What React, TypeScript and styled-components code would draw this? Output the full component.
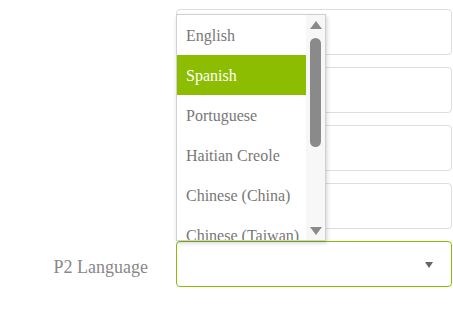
import styled, { createGlobalStyle } from "styled-components";

const GlobalStyle = createGlobalStyle`
    html, body {
        margin: 0;
        padding: 0;
        background: #fff;
    }
`;

const serif = `"Liberation Serif", "Times New Roman", serif`;

const languages = ["English", "Spanish", "Portuguese", "Haitian Creole", "Chinese (China)", "Chinese (Taiwan)"];

const rows = ["", "", "", ""];

const App = () => {
    return (
        <>
            <GlobalStyle />
            <Form>
                {rows.map((label, i) => (
                    <Row key={i}>
                        <Label>{label}</Label>
                        <Field />
                    </Row>
                ))}
                <Row>
                    <Label>P2 Language</Label>
                    <SelectField focused>
                        <Caret />
                    </SelectField>
                </Row>
                <Dropdown>
                    <List>
                        {languages.map((lang) => (
                            <Option key={lang} selected={lang === "Spanish"}>
                                {lang}
                            </Option>
                        ))}
                    </List>
                    <ScrollTrack>
                        <ArrowUp />
                        <Thumb />
                        <ArrowDown />
                    </ScrollTrack>
                </Dropdown>
            </Form>
        </>
    );
};

export default App;

const Form = styled.div`
    position: relative;
    display: flex;
    flex-direction: column;
    gap: 12px;
    padding-top: 9px;
    width: 453px;
    font-family: ${serif};
`;

const Row = styled.div`
    display: grid;
    grid-template-columns: 148px 276px;
    column-gap: 28px;
    align-items: center;
    height: 46px;
`;

const Label = styled.label`
    text-align: right;
    font-family: ${serif};
    font-size: 18px;
    padding-top: 7px;
    color: #888;
`;

const Field = styled.div`
    height: 46px;
    box-sizing: border-box;
    border: 1px solid #dddddd;
    border-radius: 4px;
    background: #fff;
`;

const SelectField = styled(Field)<{ focused?: boolean }>`
    position: relative;
    border-color: ${({ focused }) => (focused ? "#8dbd00" : "#dddddd")};
`;

const Caret = styled.span`
    position: absolute;
    right: 18px;
    top: 20px;
    width: 0;
    height: 0;
    border-left: 4px solid transparent;
    border-right: 4px solid transparent;
    border-top: 6px solid #666;
`;

const Dropdown = styled.div`
    position: absolute;
    top: 14px;
    left: 176px;
    width: 150px;
    height: 227px;
    box-sizing: border-box;
    border: 1px solid #d0d0d0;
    background: #fff;
    box-shadow: 1px 2px 4px rgba(0, 0, 0, 0.18);
    display: flex;
    overflow: hidden;
`;

const List = styled.ul`
    list-style: none;
    margin: 0;
    padding: 0;
    flex: 1;
    min-width: 0;
`;

const Option = styled.li<{ selected?: boolean }>`
    height: 40px;
    line-height: 42px;
    padding-left: 9px;
    font-family: ${serif};
    font-size: 16px;
    white-space: nowrap;
    overflow: hidden;
    color: ${({ selected }) => (selected ? "#fff" : "#777")};
    background: ${({ selected }) => (selected ? "#8dbd00" : "transparent")};
`;

const ScrollTrack = styled.div`
    width: 19px;
    flex-shrink: 0;
    background: #f7f7f7;
    display: flex;
    flex-direction: column;
    align-items: center;
    padding: 6px 0 5px;
    box-sizing: border-box;
`;

const ArrowUp = styled.span`
    width: 0;
    height: 0;
    border-left: 6px solid transparent;
    border-right: 6px solid transparent;
    border-bottom: 8px solid #8a8a8a;
`;

const ArrowDown = styled.span`
    margin-top: auto;
    width: 0;
    height: 0;
    border-left: 6px solid transparent;
    border-right: 6px solid transparent;
    border-top: 8px solid #8a8a8a;
`;

const Thumb = styled.div`
    margin-top: 9px;
    width: 11px;
    height: 109px;
    border-radius: 6px;
    background: #8a8a8a;
`;
